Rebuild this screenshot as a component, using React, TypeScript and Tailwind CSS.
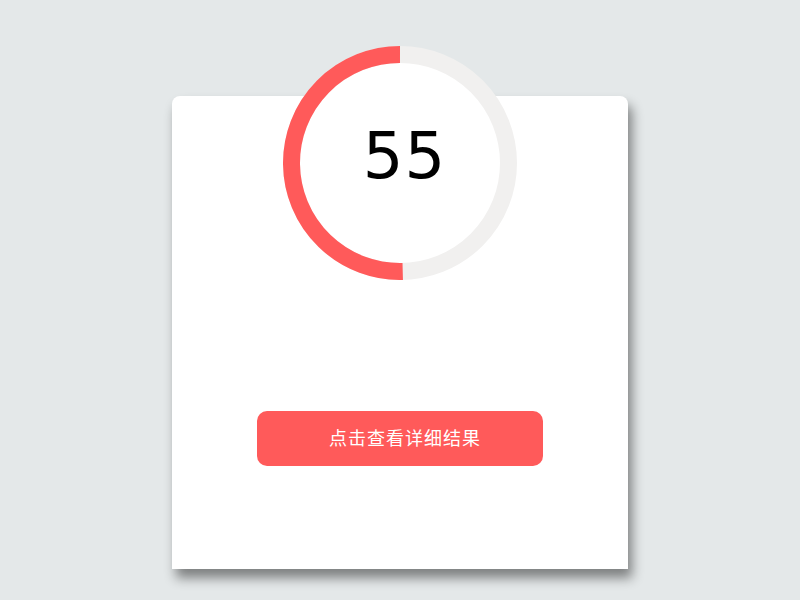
import React from 'react';

const SIZE = 234;
const STROKE = 17;

function ScoreRing({ value, fraction }: { value: number; fraction: number }) {
  const c = SIZE / 2;
  const r = c - STROKE / 2;
  // arc runs counter-clockwise from 12 o'clock
  const a = 2 * Math.PI * fraction;
  const x = c - r * Math.sin(a);
  const y = c - r * Math.cos(a);
  const large = fraction > 0.5 ? 1 : 0;

  return (
    <div className="relative w-[234px] h-[234px]">
      <svg width={SIZE} height={SIZE} className="block">
        <circle cx={c} cy={c} r={r} fill="#ffffff" stroke="#f1f0ef" strokeWidth={STROKE} />
        <path
          d={`M ${c} ${c - r} A ${r} ${r} 0 ${large} 0 ${x} ${y}`}
          fill="none"
          stroke="#ff5a5a"
          strokeWidth={STROKE}
        />
      </svg>
      <div className="absolute inset-0 flex items-center justify-center pb-[14px] pl-[9px]">
        <span className="text-[64px] leading-none text-black tracking-[1px]">{value}</span>
      </div>
    </div>
  );
}

export default function App() {
  return (
    <div
      className="min-h-[600px] bg-[#e4e8e9] flex justify-center pt-[96px]"
      style={{ fontFamily: '"DejaVu Sans", "Noto Sans CJK SC", sans-serif' }}
    >
      <div className="w-[456px] h-[473px] bg-white rounded-t-[8px] shadow-[4px_9px_12px_rgba(0,0,0,0.45)] flex flex-col items-center">
        <div className="-mt-[50px]">
          <ScoreRing value={55} fraction={0.504} />
        </div>
        <button className="mt-[131px] w-[286px] h-[55px] rounded-[10px] bg-[#ff5a5a] text-white text-[18px] pl-[10px] tracking-[1px]">
          点击查看详细结果
        </button>
      </div>
    </div>
  );
}
